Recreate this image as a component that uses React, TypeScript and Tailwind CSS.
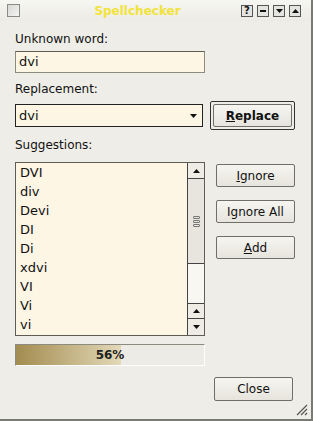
import React from 'react';

const suggestions = ['DVI', 'div', 'Devi', 'DI', 'Di', 'xdvi', 'VI', 'Vi', 'vi'];

function Arrow({ dir }: { dir: 'up' | 'down' }) {
    return (
        <svg width="7" height="4" viewBox="0 0 7 4">
            {dir === 'up' ? <path d="M0 4 L3.5 0 L7 4 Z" fill="#111" /> : <path d="M0 0 L7 0 L3.5 4 Z" fill="#111" />}
        </svg>
    );
}

function TitleBox({ children }: { children: React.ReactNode }) {
    return (
        <div className="w-[12px] h-[12px] border border-[#555] bg-[#e4e4e0] flex items-center justify-center text-[10px] font-bold leading-none text-[#111]">
            {children}
        </div>
    );
}

function SideButton({ children, className = '' }: { children: React.ReactNode; className?: string }) {
    return (
        <button className={`w-[79px] h-[23px] rounded-[2px] border border-[#6f6f6a] bg-gradient-to-b from-[#f6f5f0] to-[#e6e4dc] text-[12px] text-[#111] flex items-center justify-center ${className}`}>
            {children}
        </button>
    );
}

export default function App() {
    return (
        <div className="relative w-[313px] h-[421px] bg-[#eeede7] border-r-2 border-b-2 border-[#7a7a74] flex flex-col text-[#111]" style={{ fontFamily: '"DejaVu Sans", Verdana, sans-serif' }}>
            {/* title bar */}
            <div className="h-[21px] flex items-center px-[7px] bg-gradient-to-b from-[#f6f6f2] to-[#ecebe5]">
                <div className="w-[13px] h-[13px] border border-[#8a8a86] bg-gradient-to-br from-[#d8d8d6] to-[#f4f4f2]"></div>
                <div className="flex-1 text-center text-[12px] font-bold text-[#f2e33a] pl-[14px]">Spellchecker</div>
                <div className="flex gap-[4px] mr-[3px]">
                    <TitleBox>?</TitleBox>
                    <TitleBox><span className="block w-[6px] h-[2px] bg-[#111]"></span></TitleBox>
                    <TitleBox><Arrow dir="down" /></TitleBox>
                    <TitleBox><Arrow dir="up" /></TitleBox>
                </div>
            </div>

            <div className="flex flex-col pl-[15px] pr-[16px] text-[12px]">
                <div className="mt-[10px] h-[16px] leading-[16px]">Unknown word:</div>
                <div className="mt-[4px] w-[190px] h-[22px] border border-[#8d8a80] border-t-[#5f5c55] bg-[#fdf6e4] flex items-center pl-[3px] text-[13px]">dvi</div>

                <div className="mt-[8px] h-[16px] leading-[16px]">Replacement:</div>
                <div className="flex items-start mt-[4px]">
                    <div className="mt-[3px] w-[190px] h-[23px] border border-[#222] bg-[#fdf6e4] flex items-center text-[13px]">
                        <span className="flex-1 pl-[3px]">dvi</span>
                        <span className="w-[17px] flex justify-center"><Arrow dir="down" /></span>
                    </div>
                    <div className="ml-[7px] w-[86px] h-[29px] border border-[#333] rounded-[2px] p-[2px]">
                        <button className="w-full h-full border border-[#6f6f6a] rounded-[2px] bg-gradient-to-b from-[#f6f5f0] to-[#e6e4dc] text-[12px] font-bold">
                            <span className="underline">R</span>eplace
                        </button>
                    </div>
                </div>

                <div className="mt-[7px] h-[16px] leading-[16px]">Suggestions:</div>

                <div className="flex mt-[9px]">
                    <div className="w-[190px] h-[174px] border border-[#5f5c55] bg-[#fdf6e4] flex">
                        <div className="flex-1 flex flex-col">
                            {suggestions.map((s) => (
                                <div key={s} className="h-[19px] leading-[19px] pl-[4px] text-[13px]">{s}</div>
                            ))}
                        </div>
                        <div className="w-[17px] border-l border-[#444] flex flex-col bg-[#f8f7f2]">
                            <div className="h-[16px] border-b border-[#444] bg-[#eeece5] flex items-center justify-center"><Arrow dir="up" /></div>
                            <div className="h-[85px] border-b border-[#444] bg-[#e7e5dd] flex items-center justify-center">
                                <div className="flex flex-col gap-[1px]">
                                    <span className="block w-[7px] h-[3px] border border-[#777] rounded-[1px]"></span>
                                    <span className="block w-[7px] h-[3px] border border-[#777] rounded-[1px]"></span>
                                    <span className="block w-[7px] h-[3px] border border-[#777] rounded-[1px]"></span>
                                </div>
                            </div>
                            <div className="flex-1"></div>
                            <div className="h-[16px] border-t border-b border-[#444] bg-[#eeece5] flex items-center justify-center"><Arrow dir="up" /></div>
                            <div className="h-[16px] bg-[#eeece5] flex items-center justify-center"><Arrow dir="down" /></div>
                        </div>
                    </div>
                    <div className="ml-[11px] mt-[2px] flex flex-col gap-[13px]">
                        <SideButton><span className="underline">I</span>gnore</SideButton>
                        <SideButton>Ignore All</SideButton>
                        <SideButton><span className="underline">A</span>dd</SideButton>
                    </div>
                </div>

                <div className="mt-[8px] w-[190px] h-[22px] border border-[#fff] border-t-[#8d8a80] border-l-[#8d8a80] bg-[#ecebe5] relative flex items-center justify-center">
                    <div className="absolute left-0 top-0 bottom-0 w-[56%] bg-gradient-to-r from-[#a38c4f] to-[#e3d9b8]"></div>
                    <span className="relative text-[12px] font-bold text-[#222]">56%</span>
                </div>

                <div className="flex justify-end mt-[11px]">
                    <SideButton className="h-[24px] mr-[2px]">Close</SideButton>
                </div>
            </div>

            <svg className="absolute right-[3px] bottom-[3px]" width="14" height="14" viewBox="0 0 14 14">
                <path d="M13 3 L3 13 M13 7 L7 13 M13 11 L11 13" stroke="#555" strokeWidth="1.2" />
            </svg>
        </div>
    );
}
